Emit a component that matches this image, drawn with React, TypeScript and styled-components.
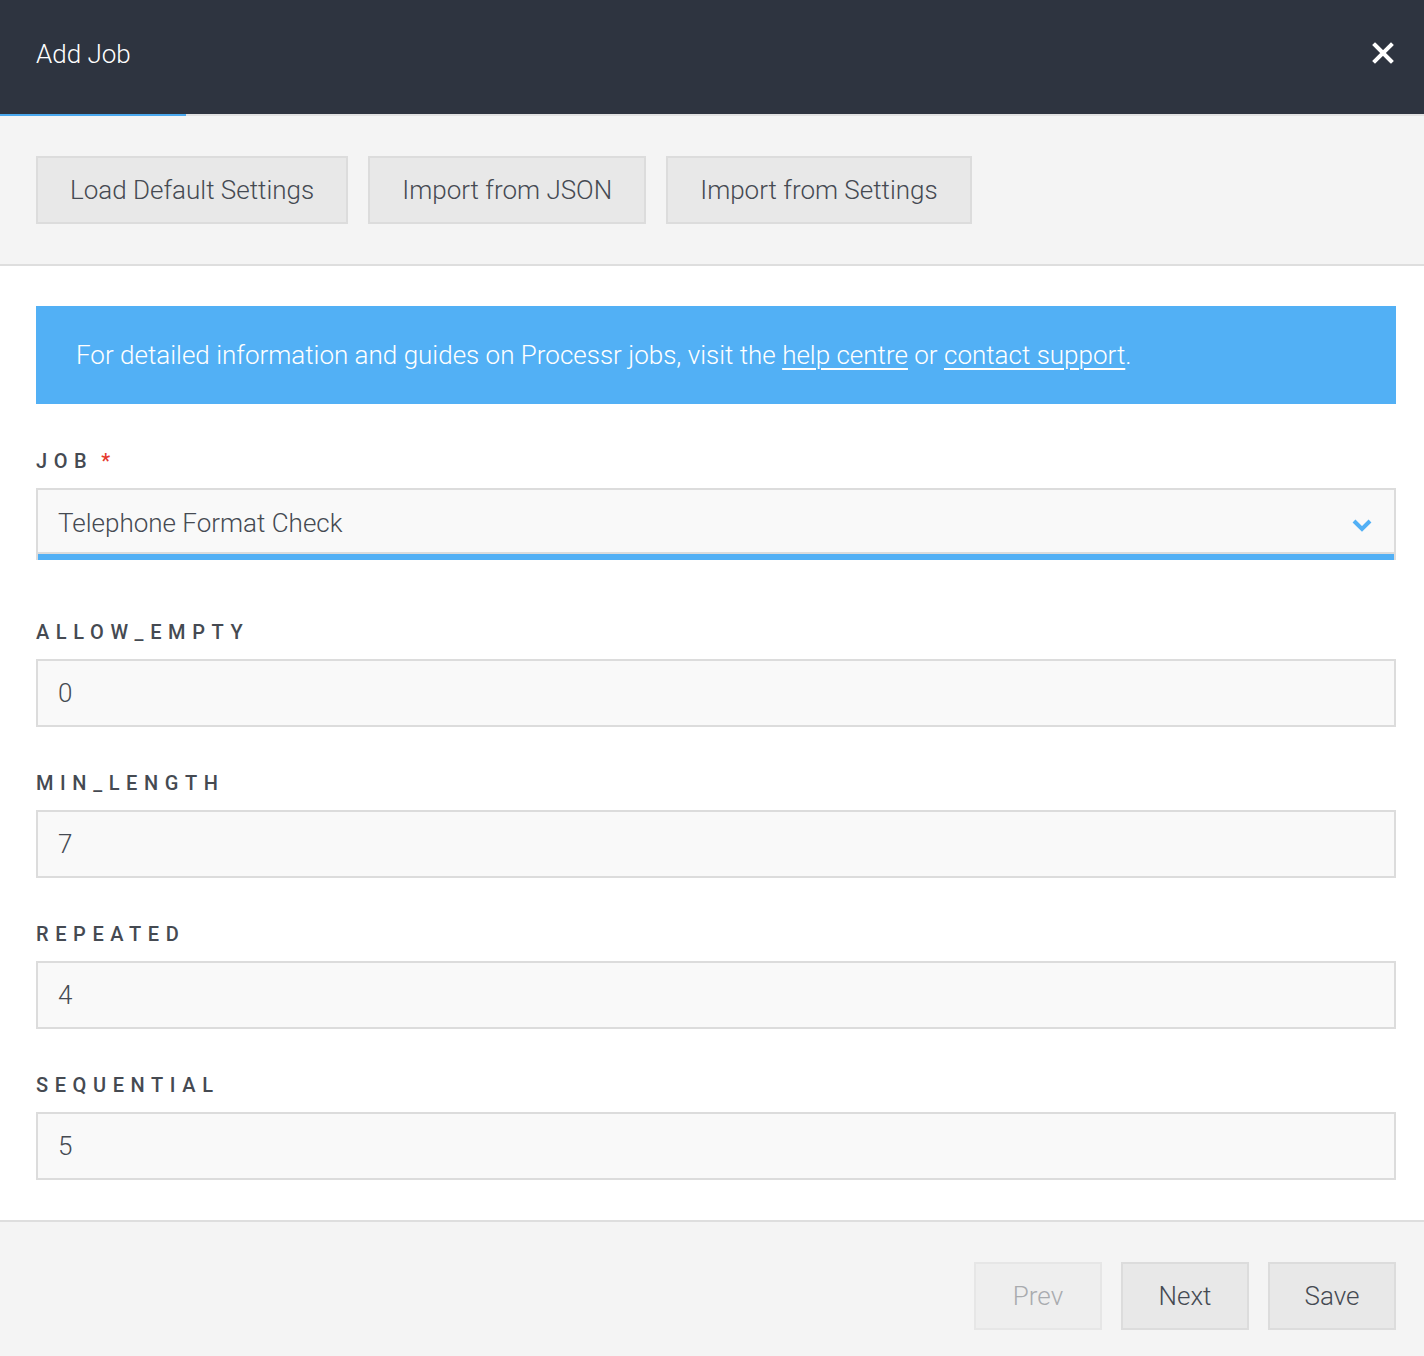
import * as React from 'react';
import styled, { createGlobalStyle } from 'styled-components';

const GlobalStyle = createGlobalStyle`
  * { box-sizing: border-box; }
  body {
    margin: 0;
    background: #ffffff;
    font-family: Roboto, "Liberation Sans", Arial, sans-serif;
    color: #454a52;
  }
`;

const Modal = styled.div`
  display: flex;
  flex-direction: column;
  width: 1424px;
  min-height: 1356px;
  background: #ffffff;
`;

const Header = styled.header`
  display: flex;
  align-items: center;
  justify-content: space-between;
  height: 116px;
  padding: 0 26px 6px 36px;
  background: #2e3440;
  border-bottom: 2px solid #e2e2e2;
  position: relative;
`;

const HeaderAccent = styled.span`
  position: absolute;
  left: 0;
  bottom: -2px;
  width: 186px;
  height: 2px;
  background: #4aa8ee;
`;

const Title = styled.h1`
  margin: 0;
  font-size: 26px;
  font-weight: 300;
  color: #ffffff;
`;

const CloseButton = styled.button`
  display: flex;
  align-items: center;
  justify-content: center;
  width: 30px;
  height: 30px;
  padding: 0;
  margin-top: -2px;
  border: none;
  background: transparent;
  cursor: pointer;
`;

const Toolbar = styled.div`
  display: flex;
  gap: 20px;
  padding: 40px 36px 40px;
  background: #f4f4f4;
  border-bottom: 2px solid #dedede;
`;

const Button = styled.button<{ $disabled?: boolean }>`
  height: 68px;
  padding: 0 32px;
  font-family: Roboto, "Liberation Sans", Arial, sans-serif;
  font-size: 26px;
  font-weight: 300;
  color: ${(p) => (p.$disabled ? '#a9abae' : '#454a52')};
  background: ${(p) => (p.$disabled ? '#eeeeee' : '#e8e8e8')};
  border: 2px solid ${(p) => (p.$disabled ? '#e6e6e6' : '#dcdcdc')};
  border-radius: 0;
  cursor: ${(p) => (p.$disabled ? 'default' : 'pointer')};
`;

const FooterButton = styled(Button)`
  width: 128px;
  padding: 0;
`;

const Body = styled.div`
  display: flex;
  flex-direction: column;
  padding: 40px 28px 40px 36px;
`;

const Notice = styled.div`
  display: flex;
  align-items: center;
  height: 98px;
  padding: 0 40px;
  margin-bottom: 45px;
  background: #52b0f5;
  color: #ffffff;
  font-size: 26px;
  font-weight: 300;

  a {
    color: #ffffff;
    text-decoration: underline;
    text-underline-offset: 4px;
    text-decoration-thickness: 2px;
  }
`;

const Field = styled.div<{ $gap: number }>`
  display: flex;
  flex-direction: column;
  gap: 15px;
  margin-bottom: ${(p) => p.$gap}px;
`;

const Label = styled.label`
  display: flex;
  gap: 8px;
  height: 24px;
  align-items: center;
  font-size: 20px;
  font-weight: 500;
  letter-spacing: 6.6px;
  color: #454a52;
`;

const Required = styled.span`
  color: #e53a2e;
  letter-spacing: 0;
`;

const SelectBox = styled.div`
  display: flex;
  align-items: center;
  justify-content: space-between;
  height: 72px;
  padding: 0 22px 0 20px;
  background: #f9f9f9;
  border: 2px solid #dcdcdc;
  border-bottom: none;
  box-shadow: inset 0 -6px 0 #52b0f5, inset 0 -8px 0 #dcdcdc;
  font-size: 26px;
  font-weight: 300;
  color: #454a52;
`;

const SelectText = styled.span`
  margin-bottom: 4px;
`;

const Input = styled.input`
  height: 68px;
  padding: 0 20px;
  background: #f9f9f9;
  border: 2px solid #dcdcdc;
  border-radius: 0;
  outline: none;
  font-family: Roboto, "Liberation Sans", Arial, sans-serif;
  font-size: 26px;
  font-weight: 300;
  color: #454a52;
`;

const Footer = styled.footer`
  display: flex;
  justify-content: flex-end;
  gap: 19px;
  flex: 1;
  padding: 40px 28px 26px;
  background: #f4f4f4;
  border-top: 2px solid #dedede;
`;

const fields = [
  { name: 'ALLOW_EMPTY', value: '0' },
  { name: 'MIN_LENGTH', value: '7' },
  { name: 'REPEATED', value: '4' },
  { name: 'SEQUENTIAL', value: '5' },
];

export default function App() {
  return (
    <>
      <GlobalStyle />
      <Modal>
        <Header>
          <Title>Add Job</Title>
          <CloseButton aria-label="Close">
            <svg width="22" height="22" viewBox="0 0 22 22">
              <path d="M3 3 L19 19 M19 3 L3 19" stroke="#ffffff" strokeWidth="4" strokeLinecap="square" />
            </svg>
          </CloseButton>
          <HeaderAccent />
        </Header>

        <Toolbar>
          <Button>Load Default Settings</Button>
          <Button>Import from JSON</Button>
          <Button>Import from Settings</Button>
        </Toolbar>

        <Body>
          <Notice>
            <span>
              For detailed information and guides on Processr jobs, visit the{' '}
              <a href="#">help centre</a> or <a href="#">contact support</a>.
            </span>
          </Notice>

          <Field $gap={60}>
            <Label>
              JOB <Required>*</Required>
            </Label>
            <SelectBox>
              <SelectText>Telephone Format Check</SelectText>
              <svg width="20" height="14" viewBox="0 0 20 14">
                <path d="M2 3 L10 11 L18 3" fill="none" stroke="#52b0f5" strokeWidth="4" />
              </svg>
            </SelectBox>
          </Field>

          {fields.map((f, i) => (
            <Field key={f.name} $gap={i === fields.length - 1 ? 0 : 44}>
              <Label>{f.name}</Label>
              <Input defaultValue={f.value} />
            </Field>
          ))}
        </Body>

        <Footer>
          <FooterButton $disabled>Prev</FooterButton>
          <FooterButton>Next</FooterButton>
          <FooterButton>Save</FooterButton>
        </Footer>
      </Modal>
    </>
  );
}
